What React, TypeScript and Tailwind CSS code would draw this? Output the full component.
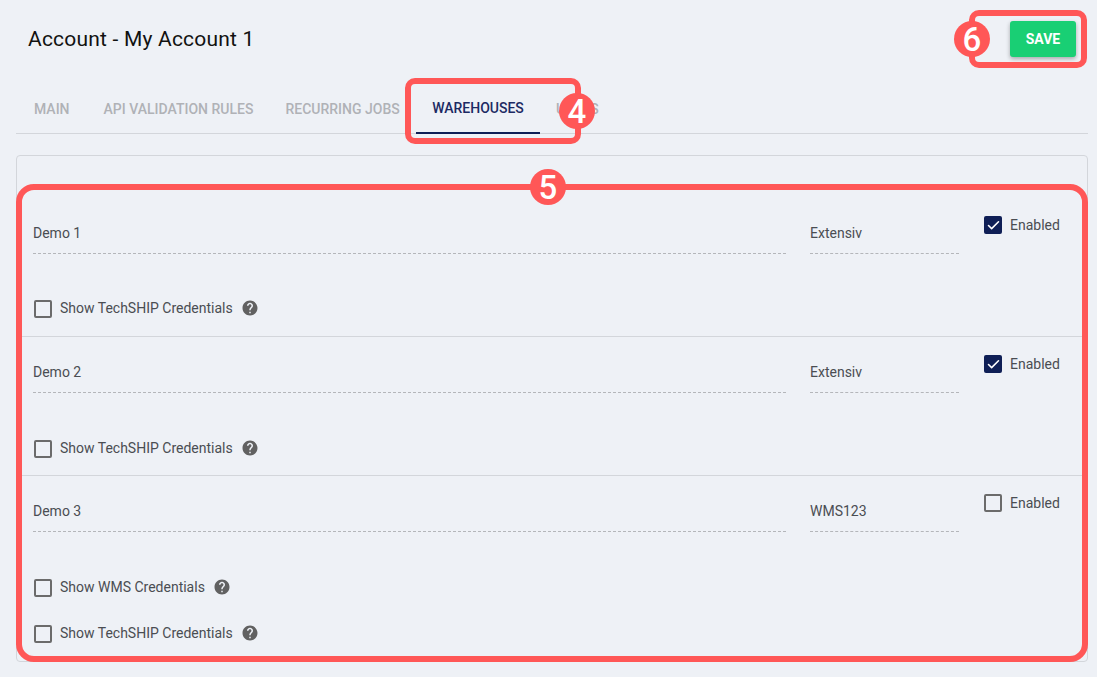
import React from "react";
import { Check } from "lucide-react";

const HelpIcon = () => (
  <svg viewBox="0 0 24 24" className="h-[18px] w-[18px] fill-[#616161]">
    <path d="M12 2C6.48 2 2 6.48 2 12s4.48 10 10 10 10-4.48 10-10S17.52 2 12 2zm1 17h-2v-2h2v2zm2.07-7.75l-.9.92C13.45 12.9 13 13.5 13 15h-2v-.5c0-1.1.45-2.1 1.17-2.83l1.24-1.26c.37-.36.59-.86.59-1.41 0-1.1-.9-2-2-2s-2 .9-2 2H8c0-2.21 1.79-4 4-4s4 1.79 4 4c0 .88-.36 1.68-.93 2.25z" />
  </svg>
);

const Checkbox = ({ checked }: { checked?: boolean }) =>
  checked ? (
    <span className="flex h-[18px] w-[18px] items-center justify-center rounded-[2px] bg-[#0f1f56]">
      <Check className="h-[15px] w-[15px] text-white" strokeWidth={2.5} />
    </span>
  ) : (
    <span className="h-[18px] w-[18px] rounded-[2px] border-2 border-[#6b6b6b]" />
  );

const CredentialRow = ({ label }: { label: string }) => (
  <div className="flex h-[18px] items-center pl-[1px]">
    <Checkbox />
    <span className="mb-[2px] ml-2 text-sm text-[#4a4d52]">{label}</span>
    <span className="mb-[2px] ml-2">
      <HelpIcon />
    </span>
  </div>
);

const Field = ({ value, className }: { value: string; className: string }) => (
  <div className={`mt-[15px] h-[42px] border-b border-dashed border-[#b4b6ba] pt-[11px] text-sm leading-[20px] text-[#4a4d52] ${className}`}>
    {value}
  </div>
);

const warehouses = [
  { name: "Demo 1", system: "Extensiv", enabled: true, creds: ["Show TechSHIP Credentials"] },
  { name: "Demo 2", system: "Extensiv", enabled: true, creds: ["Show TechSHIP Credentials"] },
  { name: "Demo 3", system: "WMS123", enabled: false, creds: ["Show WMS Credentials", "Show TechSHIP Credentials"] },
];

const Marker = ({ n, className }: { n: string; className: string }) => (
  <span className={`absolute flex h-9 w-9 items-center justify-center rounded-full bg-[#ff5757] text-[33px] font-medium leading-none text-white ${className}`}>
    {n}
  </span>
);

export default function App() {
  return (
    <div className="relative h-[677px] w-[1097px] overflow-hidden bg-[#eef1f6] font-['Roboto',sans-serif]">
      {/* Header */}
      <div className="flex h-[78px] items-start justify-between pl-7 pr-[21px] pt-[21px]">
        <h1 className="text-[21px] font-normal leading-[36px] tracking-[0.2px] text-[#111]">Account - My Account 1</h1>
        <button className="h-9 w-[66px] rounded-[3px] bg-[#19cf74] text-sm font-bold text-white shadow-[0_2px_4px_rgba(0,0,0,0.3)]">
          SAVE
        </button>
      </div>

      {/* Tabs */}
      <div className="ml-4 mr-[9px] flex h-[56px] items-stretch border-b border-[#d3d6db] pt-[6px] text-sm font-medium">
        <div className="flex w-[400px] items-center pl-[18px] text-[#b0b2b6]">
          <span>MAIN</span>
          <span className="ml-[34px]">API VALIDATION RULES</span>
          <span className="ml-8">RECURRING JOBS</span>
        </div>
        <div className="-mb-px flex w-[124px] items-center justify-center border-b-2 border-[#0f1f56] text-[#1c2a63]">
          WAREHOUSES
        </div>
        <div className="flex items-center pl-4 text-[#b0b2b6]">USERS</div>
      </div>

      {/* Warehouses panel */}
      <div className="ml-4 mr-[9px] mt-[21px] h-[507px] rounded-[4px] border border-[#d3d6db] pt-[41px]">
        {warehouses.map((w, i) => (
          <div key={w.name} className={`h-[139px] px-4 ${i > 0 ? "border-t border-[#d3d6db]" : ""}`}>
            <div className={`flex items-start ${i > 0 ? "-mt-px" : ""}`}>
              <Field value={w.name} className="w-[753px]" />
              <Field value={w.system} className="ml-[24px] w-[149px]" />
              <div className="ml-[25px] mt-[19px] flex h-[18px] items-center">
                <Checkbox checked={w.enabled} />
                <span className="ml-2 text-sm text-[#4a4d52]">Enabled</span>
              </div>
            </div>
            <div className={`flex flex-col gap-[28px] ${i > 0 ? "mt-[47px]" : "mt-[46px]"}`}>
              {w.creds.map((c) => (
                <CredentialRow key={c} label={c} />
              ))}
            </div>
          </div>
        ))}
      </div>

      {/* Annotations */}
      <div className="absolute left-[405px] top-[78px] h-[66px] w-[176px] rounded-[10px] border-[6px] border-[#ff5757]" />
      <div className="absolute left-[969px] top-[10px] h-[58px] w-[118px] rounded-[10px] border-[6px] border-[#ff5757]" />
      <div className="absolute left-[16px] top-[184px] h-[478px] w-[1072px] rounded-[18px] border-[6px] border-[#ff5757]" />
      <Marker n="4" className="left-[559px] top-[93px]" />
      <Marker n="5" className="left-[530px] top-[169px]" />
      <Marker n="6" className="left-[954px] top-[21px]" />
    </div>
  );
}
